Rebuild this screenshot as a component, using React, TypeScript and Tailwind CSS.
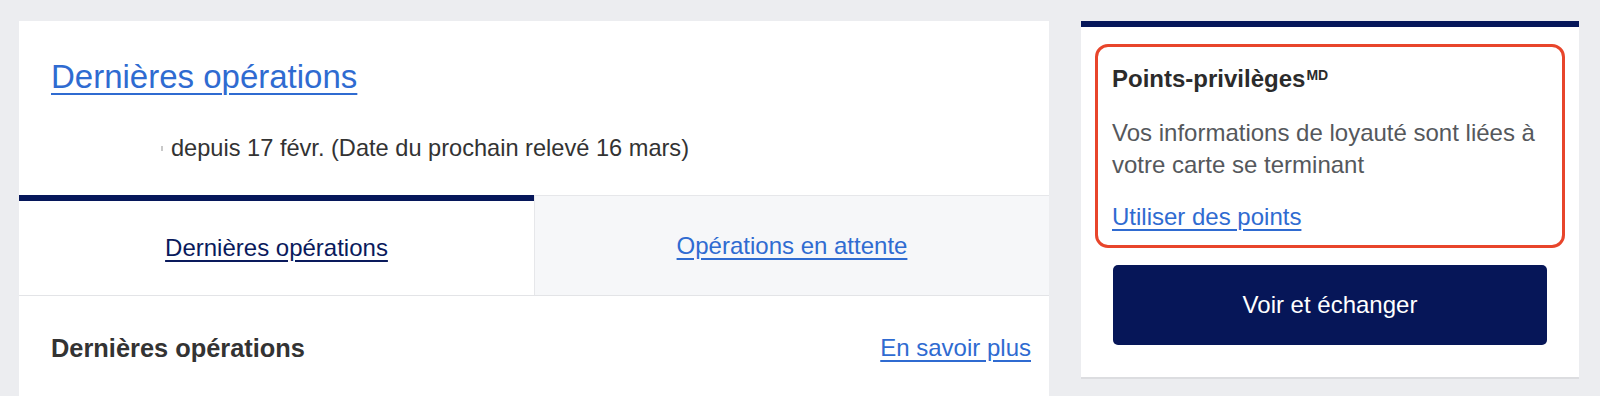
import React from 'react';

const NAVY = 'text-[#0a1a5c]';

function RecentActivity() {
  return (
    <section className="w-[1030px] shrink-0 bg-white">
      <div className="pt-[36px] pb-[31px] px-[32px]">
        <a href="#" className="text-[33px] leading-[40px] text-[#2f6bd1] underline underline-offset-[5px] decoration-[2px]">
          Dernières opérations
        </a>
        <p className="mt-[35px] pl-[110px] flex items-center text-[23.6px] leading-[32px] text-[#333]">
          <span className="inline-block w-[2px] h-[5px] bg-[#c9c9c9] mr-[8px]" />
          depuis 17 févr. (Date du prochain relevé 16 mars)
        </p>
      </div>

      <div className="grid grid-cols-2 border-b border-[#e3e4e7]">
        <div className="h-[100px] border-t-[6px] border-[#06175a] flex items-center justify-center">
          <a href="#" className={`text-[24px] ${NAVY} underline underline-offset-[4px]`}>
            Dernières opérations
          </a>
        </div>
        <div className="h-[100px] bg-[#f6f7f9] border-l border-t border-[#e6e7ea] flex items-center justify-center">
          <a href="#" className="text-[24px] text-[#2f6bd1] underline underline-offset-[4px]">
            Opérations en attente
          </a>
        </div>
      </div>

      <div className="pt-[36px] pb-[40px] pl-[32px] pr-[18px] flex items-center justify-between">
        <h3 className="text-[25.4px] leading-[32px] font-bold text-[#333]">Dernières opérations</h3>
        <a href="#" className="text-[24px] leading-[32px] text-[#2f6bd1] underline underline-offset-[4px]">
          En savoir plus
        </a>
      </div>
    </section>
  );
}

function PointsCard() {
  return (
    <aside className="w-[498px] shrink-0 self-start bg-white border-t-[6px] border-[#06175a] border-b-2 border-b-[#dcdde0] px-[32px] pt-[17px] pb-[32px]">
      <div className="-mx-[18px] border-[3px] border-[#e8452b] rounded-[13px] pl-[14px] pr-[14px] pt-[16px] pb-[12px]">
        <h3 className="text-[24px] leading-[32px] font-bold text-[#2b2b2b]">
          Points-privilèges<sup className="text-[14px] font-bold ml-[1px]">MD</sup>
        </h3>
        <p className="mt-[22px] text-[24px] leading-[32px] text-[#55585c]">
          Vos informations de loyauté sont liées à votre carte se terminant
        </p>
        <a href="#" className="block mt-[20px] text-[24px] leading-[32px] text-[#2f6bd1] underline underline-offset-[4px] w-fit">
          Utiliser des points
        </a>
      </div>
      <button className="mt-[17px] w-full h-[80px] rounded-[5px] bg-[#061658] text-white text-[24px]">
        Voir et échanger
      </button>
    </aside>
  );
}

export default function App() {
  return (
    <div className="w-[1600px] h-[396px] overflow-hidden bg-[#ecedf0] pt-[21px] pl-[19px] flex gap-[32px] font-['Liberation_Sans',Arial,sans-serif]">
      <RecentActivity />
      <PointsCard />
    </div>
  );
}
